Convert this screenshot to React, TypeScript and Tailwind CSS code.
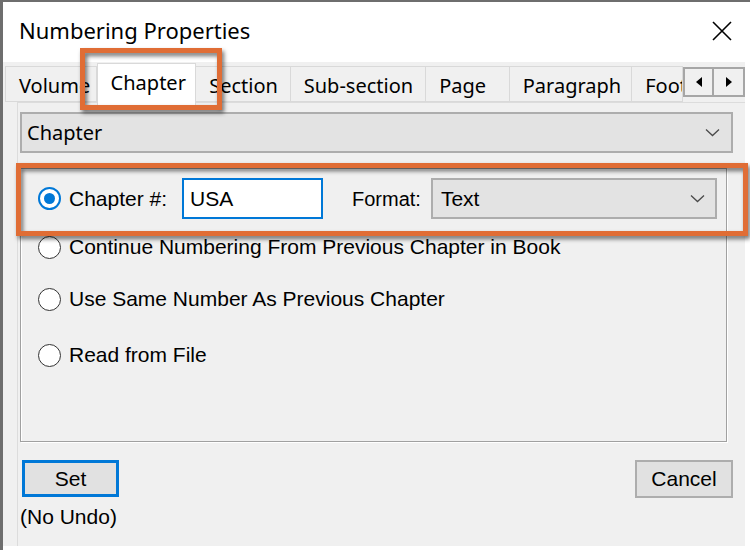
import React from "react";

const ui = { fontFamily: '"Noto Sans", "Open Sans", sans-serif' };
const ms = { fontFamily: '"Liberation Sans", Arial, sans-serif' };

function Chevron() {
  return (
    <svg width="15" height="9" viewBox="0 0 15 9" className="shrink-0">
      <path d="M1 1.5 L7.5 7.5 L14 1.5" fill="none" stroke="#4a4a4a" strokeWidth="1.3" />
    </svg>
  );
}

function Radio({ checked }: { checked?: boolean }) {
  if (checked) {
    return (
      <span className="w-[23px] h-[23px] rounded-full border-2 border-[#0078d7] bg-white flex items-center justify-center shrink-0">
        <span className="w-[11px] h-[11px] rounded-full bg-[#0078d7]" />
      </span>
    );
  }
  return <span className="w-[23px] h-[23px] rounded-full border-[1.5px] border-[#333333] bg-white shrink-0" />;
}

const tabs = [
  { label: "Volume", w: "w-[92px]" },
  { label: "Chapter", w: "w-[100px]", active: true },
  { label: "Section", w: "w-[95px]" },
  { label: "Sub-section", w: "w-[136px]" },
  { label: "Page", w: "w-[84px]" },
  { label: "Paragraph", w: "w-[123px]" },
  { label: "Foot", w: "w-[51px]" },
];

export default function App() {
  return (
    <div className="relative w-[750px] h-[550px] bg-white overflow-hidden">
      <div className="w-[750px] h-[550px] flex flex-col border-t-2 border-l-[3px] border-[#6e6e6e]">
        {/* title bar */}
        <div className="h-[60px] flex items-center justify-between pl-4 pr-[18px] pb-[3px] shrink-0">
          <span className="text-[22px] text-black" style={ui}>Numbering Properties</span>
          <svg width="20" height="20" viewBox="0 0 20 20">
            <path d="M1 1 L19 19 M19 1 L1 19" stroke="#000" strokeWidth="1.6" />
          </svg>
        </div>

        <div className="w-[742px] h-[484px] bg-[#f0f0f0] flex flex-col">
          {/* tab strip */}
          <div className="h-[40px] flex items-start pl-[2px] shrink-0 relative z-10">
            {tabs.map((t) =>
              t.active ? (
                <div
                  key={t.label}
                  className={`${t.w} mt-[1px] h-[42px] bg-white border border-b-0 border-[#d9d9d9] pl-[13px] pt-[4px] text-[20px] text-black overflow-hidden whitespace-nowrap`}
                  style={ui}
                >
                  {t.label}
                </div>
              ) : (
                <div
                  key={t.label}
                  className={`${t.w} mt-[4px] h-[36px] border border-[#d9d9d9] border-l-0 first:border-l pl-[13px] pt-[4px] text-[20px] text-black overflow-hidden whitespace-nowrap`}
                  style={ui}
                >
                  {t.label}
                </div>
              )
            )}
            <div className="mt-[5px] flex">
              <div className="w-[31px] h-[30px] border-2 border-[#a6a6a6] bg-[#f0f0f0] flex items-center justify-center">
                <svg width="6" height="10" viewBox="0 0 6 10"><path d="M6 0 L0 5 L6 10 Z" fill="#000" /></svg>
              </div>
              <div className="w-[31px] h-[30px] border-2 border-l-0 border-[#a6a6a6] bg-[#f0f0f0] flex items-center justify-center">
                <svg width="6" height="10" viewBox="0 0 6 10"><path d="M0 0 L6 5 L0 10 Z" fill="#000" /></svg>
              </div>
            </div>
          </div>

          {/* tab page */}
          <div className="ml-[14px] flex-1 border-t border-l border-[#dcdcdc] pl-[2px] pr-[12px] pt-[9px] flex flex-col">
            <div className="h-[41px] border-2 border-[#adadad] bg-[#e3e3e3] flex items-center justify-between pl-[5px] pr-[11px]">
              <span className="text-[20px] text-black" style={ui}>Chapter</span>
              <Chevron />
            </div>

            <div className="mt-[15px] w-[707px] h-[274px] border border-[#a0a0a0] shadow-[inset_1px_1px_0_#ffffff,1px_1px_0_#ffffff] pl-[17px] pt-[9px] flex flex-col text-[21px] text-black" style={ms}>
              <div className="h-[41px] flex items-center">
                <Radio checked />
                <span className="ml-[8px] w-[103px] whitespace-nowrap">Chapter #:</span>
                <div className="ml-[10px] w-[141px] h-[41px] border-2 border-[#0078d7] bg-white pl-[6px] flex items-center">USA</div>
                <span className="ml-[29px] text-[20px]">Format:</span>
                <div className="ml-[10px] w-[286px] h-[41px] border-2 border-[#adadad] bg-[#e3e3e3] flex items-center justify-between pl-[8px] pr-[10px]">
                  <span>Text</span>
                  <Chevron />
                </div>
              </div>
              <div className="mt-[16px] h-[24px] flex items-center">
                <Radio />
                <span className="ml-[8px]">Continue Numbering From Previous Chapter in Book</span>
              </div>
              <div className="mt-[28px] h-[24px] flex items-center">
                <Radio />
                <span className="ml-[8px]">Use Same Number As Previous Chapter</span>
              </div>
              <div className="mt-[32px] h-[24px] flex items-center">
                <Radio />
                <span className="ml-[8px]">Read from File</span>
              </div>
            </div>

            <div className="mt-[18px] flex justify-between items-start text-[21px] text-black" style={ms}>
              <div className="flex flex-col">
                <button className="ml-[2px] w-[97px] h-[37px] border-[3px] border-[#0078d7] bg-[#e1e1e1] flex items-center justify-center">Set</button>
                <span className="mt-[8px] leading-[24px]">(No Undo)</span>
              </div>
              <button className="w-[98px] h-[38px] border-2 border-[#adadad] bg-[#e1e1e1] flex items-center justify-center">Cancel</button>
            </div>
          </div>
        </div>
      </div>

      {/* orange callout boxes */}
      <div className="absolute left-[80px] top-[48px] w-[142px] h-[62px] border-[5px] border-[#e06d35] drop-shadow-[2px_3px_2px_rgba(0,0,0,0.55)] z-20" />
      <div className="absolute left-[16px] top-[163px] w-[732px] h-[73px] border-[5px] border-[#e06d35] drop-shadow-[2px_3px_2px_rgba(0,0,0,0.55)] z-20" />
    </div>
  );
}
